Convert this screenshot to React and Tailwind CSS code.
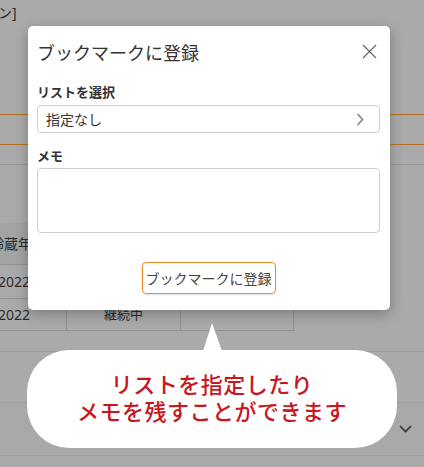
export default function App() {
  return (
    <div
      className="relative w-[424px] h-[467px] overflow-hidden bg-[#aaaaaa] text-[#222]"
      style={{ fontFamily: '"Noto Sans", "Noto Sans CJK JP", sans-serif' }}
    >
      {/* dimmed page behind the dialog */}
      <div className="flex flex-col">
        <div className="h-[26px] pt-[3px] text-[14px] leading-[20px] text-[#2a2a2a]">
          <span className="-ml-[2px]">ン]</span>
        </div>
        <div className="h-[88px]" />
        <div className="h-[31px] border-t border-b border-[#b4721f]" />
        <div className="h-[20px] border-b border-[#999]" />
        <div className="h-[58px]" />
        <div className="w-[295px] text-[14px] text-[#2a2a2a]">
          <div className="grid grid-cols-[66px_114px_114px] h-[42px] bg-[#a3a3a3] border-b border-[#929292]">
            <div className="flex items-center -ml-[10px] whitespace-nowrap">齢蔵年</div>
            <div className="border-l border-[#929292]" />
            <div className="border-l border-r border-[#929292]" />
          </div>
          <div className="grid grid-cols-[66px_114px_114px] h-[34px] border-b border-[#929292]">
            <div className="flex items-center -ml-[2px]">2022</div>
            <div className="border-l border-[#929292]" />
            <div className="border-l border-r border-[#929292]" />
          </div>
          <div className="grid grid-cols-[66px_114px_114px] h-[32px] border-b border-[#929292]">
            <div className="flex items-center -ml-[2px]">2022</div>
            <div className="flex items-center justify-center border-l border-[#929292] text-[13px]">継続中</div>
            <div className="border-l border-r border-[#929292]" />
          </div>
        </div>
        <div className="h-[21px] border-b border-[#9c9c9c]" />
        <div className="h-[50px]" />
        <div className="h-[54px] border-t border-b border-[#9f9f9f] bg-[#a8a8a8] flex items-center justify-end pr-[12px]">
          <svg width="13" height="8" viewBox="0 0 13 8" fill="none" stroke="#333" strokeWidth="1.6">
            <path d="M1 1l5.5 5.5L12 1" />
          </svg>
        </div>
      </div>

      {/* dialog */}
      <div className="absolute left-[28px] top-[26px] w-[362px] h-[284px] bg-white rounded-[5px] shadow-[0_4px_14px_rgba(0,0,0,0.28)] pl-[9px] pr-[10px] pt-[15px]">
        <div className="flex items-center justify-between">
          <h2 className="text-[18px] leading-[24px] font-normal text-[#333]">ブックマークに登録</h2>
          <button className="mr-[3px] -mt-[4px]" aria-label="close">
            <svg width="15" height="15" viewBox="0 0 15 15" stroke="#666" strokeWidth="1.2">
              <path d="M1 1l13 13M14 1L1 14" />
            </svg>
          </button>
        </div>
        <div className="mt-[18px] text-[13px] leading-[18px] font-bold text-[#333]">リストを選択</div>
        <div className="mt-[4px] h-[28px] rounded-[4px] border border-[#cfcfcf] flex items-center justify-between pl-[8px] pr-[15px] text-[14px] text-[#333]">
          <span>指定なし</span>
          <svg width="8" height="13" viewBox="0 0 8 13" fill="none" stroke="#8a8a8a" strokeWidth="1.8">
            <path d="M1.5 1l5 5.5-5 5.5" />
          </svg>
        </div>
        <div className="mt-[14px] text-[13px] leading-[18px] font-bold text-[#333]">メモ</div>
        <div className="mt-[3px] h-[65px] rounded-[4px] border border-[#cfcfcf]" />
        <div className="mt-[29px] flex justify-center">
          <button className="w-[134px] h-[32px] rounded-[4px] border border-[#f08c1e] text-[14px] text-[#444] shadow-[0_1px_2px_rgba(0,0,0,0.12)]">
            ブックマークに登録
          </button>
        </div>
      </div>

      {/* speech bubble */}
      <div className="absolute left-[27px] top-[323px] w-[370px]">
        <svg className="absolute left-[176px] top-0" width="19" height="28" viewBox="0 0 19 28">
          <path d="M9 0L19 28H0Z" fill="#fff" />
        </svg>
        <div
          className="mt-[27px] h-[98px] rounded-[42px] bg-white flex flex-col items-center justify-center text-[22px] leading-[27px] font-medium text-[#c8161e] tracking-[0.5px]"
          style={{ fontFamily: '"Noto Sans CJK JP", sans-serif' }}
        >
          <div className="-mt-[5px]">リストを指定したり</div>
          <div>メモを残すことができます</div>
        </div>
      </div>
    </div>
  );
}
